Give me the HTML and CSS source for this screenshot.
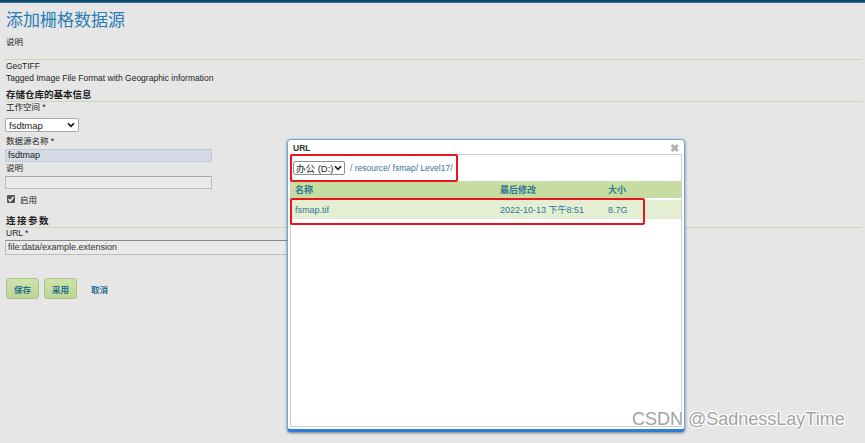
FILE: index.html
```html
<html>
<head>
    <meta charset="utf-8">
    <link rel="stylesheet" href="styles.css">
</head>
<body>
    <div class="topbar"></div>
    <div class="page">
        <h1 class="title">添加栅格数据源</h1>
        <div class="desc">说明</div>
        <div class="rule"></div>
        <div class="line">GeoTIFF</div>
        <div class="line">Tagged Image File Format with Geographic information</div>

        <div class="section">存储仓库的基本信息</div>
        <div class="label">工作空间 *</div>
        <div class="select ws">
            <span>fsdtmap</span>
            <svg width="8" height="6" viewBox="0 0 8 6"><path d="M1 1.2 L4 4.4 L7 1.2" fill="none" stroke="#111" stroke-width="1.6"/></svg>
        </div>
        <div class="label gap">数据源名称 *</div>
        <div class="input filled">fsdtmap</div>
        <div class="label tight">说明</div>
        <div class="input"></div>
        <div class="check">
            <span class="box">
                <svg width="8" height="8" viewBox="0 0 8 8"><path d="M1.5 4.2 L3.3 6 L6.6 2" fill="none" stroke="#fff" stroke-width="1.4"/></svg>
            </span>
            <span>启用</span>
        </div>

        <div class="section conn">连接参数</div>
        <div class="label">URL *</div>
        <div class="input url">file:data/example.extension</div>

        <div class="buttons">
            <span class="btn">保存</span>
            <span class="btn">采用</span>
            <span class="link">取消</span>
        </div>
    </div>

    <div class="dialog">
        <div class="dlghead">
            <span>URL</span>
            <span class="close">&#10006;</span>
        </div>
        <div class="dlgbody">
            <div class="pathbar">
                <div class="select drive">
                    <span>办公 (D:)</span>
                    <svg width="8" height="6" viewBox="0 0 8 6"><path d="M1 1.2 L4 4.4 L7 1.2" fill="none" stroke="#111" stroke-width="1.6"/></svg>
                </div>
                <span class="path">/ resource/ fsmap/ Level17/</span>
            </div>
            <div class="row head">
                <span class="cname">名称</span>
                <span class="cdate">最后修改</span>
                <span class="csize">大小</span>
            </div>
            <div class="row file">
                <span class="cname">fsmap.tif</span>
                <span class="cdate">2022-10-13 下午8:51</span>
                <span class="csize">8.7G</span>
            </div>
        </div>
        <div class="mark mark1"></div>
        <div class="mark mark2"></div>
    </div>

    <div class="watermark">CSDN @SadnessLayTime</div>
</body>
</html>
```

FILE: styles.css
```css
* {
    margin: 0;
    padding: 0;
    box-sizing: border-box;
}

body {
    background: #e6e6e6;
    font-family: "Liberation Sans", "Noto Sans CJK SC", sans-serif;
    font-size: 8.5px;
    color: #222;
    width: 865px;
    height: 443px;
    overflow: hidden;
    position: relative;
}

.topbar {
    height: 3px;
    background: #0c4b6c;
    border-bottom: 1px solid #3d7391;
}

.page {
    padding: 0 3px 0 5px;
}

.title {
    font-family: "Noto Sans CJK SC", sans-serif;
    font-weight: normal;
    font-size: 17px;
    line-height: 22px;
    color: #2a7cb4;
    margin-top: 5px;
    padding-left: 1px;
}

.desc {
    line-height: 12px;
    margin-top: 6px;
    padding-left: 1px;
}

.rule {
    border-top: 1px solid #cad6b6;
    margin-top: 11px;
}

.line {
    line-height: 12px;
    padding-left: 1px;
}

.section {
    font-weight: bold;
    font-size: 9.5px;
    line-height: 12px;
    margin-top: 5px;
    padding-left: 1px;
    border-bottom: 1px solid #cad6b6;
}

.conn {
    margin-top: 11px;
    letter-spacing: 1.5px;
}

.label {
    line-height: 11px;
    padding-left: 1px;
}

.label.gap {
    margin-top: 4px;
}

.label.tight {
    margin-top: 1px;
}

.select {
    display: flex;
    align-items: center;
    justify-content: space-between;
    background: #fff;
    border: 1px solid #a9a9a9;
    border-radius: 2px;
    padding: 0 3px 0 3px;
}

.ws {
    width: 74px;
    height: 14px;
    margin-top: 5px;
    font-size: 9.5px;
}

.input {
    width: 207px;
    height: 13px;
    margin-top: 2px;
    background: #eaeaea;
    border: 1px solid #bdbdbd;
    border-top-color: #a9a9a9;
    line-height: 11px;
    padding-left: 2px;
    font-size: 9px;
}

.input.filled {
    background: #d4dbe6;
    border-color: #c3cad4;
}

.input.url {
    width: 520px;
    height: 15px;
    margin-top: 1px;
    line-height: 13px;
    color: #333;
    border-top-color: #8a8a8a;
}

.check {
    display: flex;
    align-items: center;
    gap: 5px;
    margin-top: 4px;
    height: 11px;
    padding-left: 2px;
}

.box {
    width: 8px;
    height: 8px;
    background: #555;
    border-radius: 1px;
    display: flex;
}

.buttons {
    display: flex;
    align-items: center;
    gap: 5px;
    margin-top: 23px;
    padding-left: 1px;
}

.btn {
    display: flex;
    align-items: center;
    justify-content: center;
    width: 33px;
    height: 21px;
    background: linear-gradient(#cfe3ad, #bcd594);
    border: 1px solid #aac485;
    border-radius: 3px;
    color: #2a6d8e;
    font-weight: bold;
}

.link {
    margin-left: 9px;
    color: #2a6d8e;
    font-weight: bold;
}

.dialog {
    position: absolute;
    left: 287px;
    top: 139px;
    width: 398px;
    height: 293px;
    background: #fff;
    border: 1px solid #6aa7df;
    border-bottom: 3px solid #2a7fd6;
    border-radius: 4px;
    box-shadow: 0 1px 3px rgba(0, 0, 0, 0.5);
    padding: 0 2px 2px 2px;
    display: flex;
    flex-direction: column;
}

.dlghead {
    display: flex;
    justify-content: space-between;
    align-items: center;
    height: 14px;
    padding: 2px 3px 0 3px;
    font-weight: bold;
    color: #333;
}

.close {
    color: #b0b0b0;
    font-size: 11px;
    line-height: 11px;
}

.dlgbody {
    flex: 1;
    border: 1px solid #cfcfcf;
}

.pathbar {
    display: flex;
    align-items: center;
    height: 26px;
    padding-left: 2px;
    gap: 5px;
}

.drive {
    width: 52px;
    height: 14px;
    font-size: 9.5px;
    padding: 0 2px;
    border-color: #8f8f8f;
}

.path {
    color: #2d7896;
    font-size: 8.5px;
}

.row {
    display: flex;
    align-items: center;
    color: #2d7896;
    font-size: 9px;
}

.row.head {
    height: 17px;
    background: #c6dca0;
    font-weight: bold;
}

.row.file {
    height: 19px;
    margin-top: 2px;
    background: #e3eed2;
}

.cname {
    width: 209px;
    padding-left: 4px;
}

.cdate {
    width: 108px;
}

.mark {
    position: absolute;
    border: 2px solid #e8151b;
    border-radius: 2px;
}

.mark1 {
    left: 2px;
    top: 14px;
    width: 168px;
    height: 28px;
}

.mark2 {
    left: 2px;
    top: 58px;
    width: 355px;
    height: 27px;
}

.watermark {
    position: absolute;
    left: 632px;
    top: 409px;
    font-size: 18px;
    color: #a3a3a3;
    text-shadow: 1px 1px 0 #fff, -1px -1px 0 #fff, 1px -1px 0 #fff, -1px 1px 0 #fff;
}
```
